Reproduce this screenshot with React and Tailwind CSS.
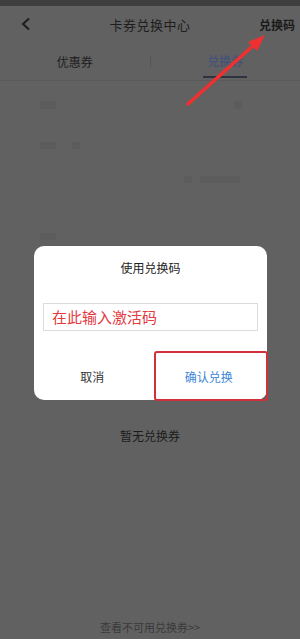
import React from "react";

const App = () => {
  return (
    <div
      className="relative w-[300px] h-[639px] overflow-hidden bg-[#616161] flex flex-col"
      style={{ fontFamily: '"Noto Sans CJK SC", "Noto Sans", sans-serif' }}
    >
      {/* status bar */}
      <div className="h-[6px] bg-[#3e3e3e]" />

      {/* header */}
      <div className="relative h-[38px] flex items-center justify-center">
        <svg className="absolute left-[20px] top-[11px]" width="12" height="14" viewBox="0 0 12 14">
          <path d="M9 1.5 L3 7 L9 12.5" fill="none" stroke="#1c1c1c" strokeWidth="2" />
        </svg>
        <span className="text-[13px] text-[#1e1e1e] tracking-[0.5px]">卡券兑换中心</span>
        <span className="absolute right-[5px] top-[10px] text-[12px] font-bold text-[#1a1a1a]">兑换码</span>
      </div>

      {/* tabs */}
      <div className="flex h-[37px] border-b border-[#5a5a5a]">
        <div className="flex-1 flex items-center justify-center">
          <span className="text-[12px] text-[#1e1e1e]">优惠券</span>
        </div>
        <div className="w-px h-[12px] self-center bg-[#555]" />
        <div className="flex-1 flex flex-col items-center justify-end">
          <span className="text-[12px] text-[#3f4f7e] mb-[6px]">兑换券</span>
          <div className="w-[44px] h-[2px] bg-[#2f3340] mb-[2px]" />
        </div>
      </div>

      {/* faint list content */}
      <div className="flex-1 flex flex-col px-[40px] pt-[20px]">
        <div className="flex gap-[16px] h-[8px]">
          <div className="w-[16px] bg-[#5c5c5c]" />
          <div className="ml-auto w-[8px] bg-[#5c5c5c] mr-[18px]" />
        </div>
        <div className="flex gap-[16px] h-[7px] mt-[33px]">
          <div className="w-[16px] bg-[#5c5c5c]" />
          <div className="w-[8px] bg-[#5c5c5c]" />
        </div>
        <div className="flex justify-end gap-[8px] h-[7px] mt-[27px] pr-[20px]">
          <div className="w-[8px] bg-[#5c5c5c]" />
          <div className="w-[40px] bg-[#5c5c5c]" />
        </div>
        <div className="w-[16px] h-[7px] bg-[#5c5c5c] mt-[50px]" />

        <div className="mt-[187px] text-center text-[12px] text-[#1c1c1c]">暂无兑换券</div>

        <div className="mt-auto mb-[4px] text-center text-[11px] text-[#3a3a3a]">查看不可用兑换券&gt;&gt;</div>
      </div>

      {/* dialog */}
      <div className="absolute left-[34px] top-[246px] w-[233px] h-[154px] bg-white rounded-[10px] flex flex-col">
        <div className="pt-[13px] text-center text-[12px] text-[#222]">使用兑换码</div>
        <div className="mx-[9px] mt-[26px] h-[28px] border border-[#dcdcdc] flex items-center px-[8px]">
          <span className="text-[15px] text-[#e23a3f]">在此输入激活码</span>
        </div>
        <div className="flex-1 flex items-center">
          <div className="flex-1 text-center text-[12px] text-[#333] pt-[22px]">取消</div>
          <div className="flex-1 text-center text-[12px] text-[#3d86d9] pt-[22px]">确认兑换</div>
        </div>
      </div>

      {/* highlight box */}
      <div className="absolute left-[154px] top-[351px] w-[114px] h-[50px] border-2 border-[#d0303a] rounded-[3px]" />

      {/* red arrow */}
      <svg className="absolute left-0 top-0" width="300" height="120" viewBox="0 0 300 120">
        <line x1="188" y1="104" x2="255" y2="44" stroke="#f03030" strokeWidth="3.5" strokeLinecap="round" />
        <polygon points="265,35 248,42 257,51" fill="#f03030" />
      </svg>
    </div>
  );
};

export default App;
